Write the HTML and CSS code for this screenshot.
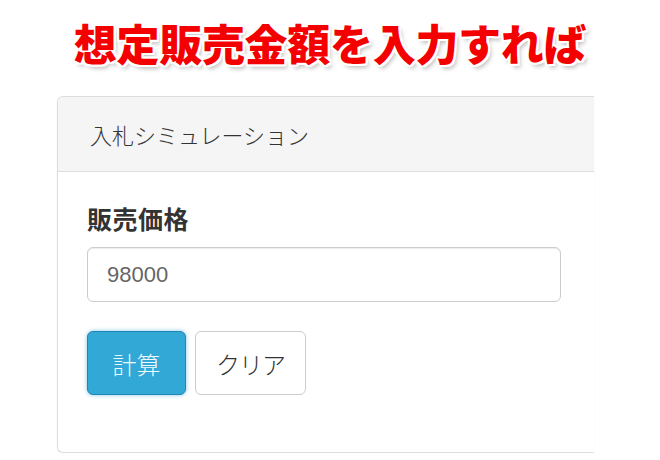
FILE: index.html
```html
<!DOCTYPE html>
<html lang="ja">
<head>
    <meta charset="UTF-8">
    <meta name="viewport" content="width=device-width, initial-scale=1.0">
    <title>入札シミュレーション</title>
    <link rel="stylesheet" href="styles.css">
</head>
<body>
    <h1 class="caption">想定販売金額を入力すれば</h1>

    <div class="panel">
        <div class="panel-heading">入札シミュレーション</div>
        <div class="panel-body">
            <label class="field-label" for="price">販売価格</label>
            <input class="field-input" id="price" type="text" value="98000">
            <div class="actions">
                <button class="btn btn-calc" type="button">計算</button>
                <button class="btn btn-clear" type="button">クリア</button>
            </div>
        </div>
    </div>
</body>
</html>
```

FILE: styles.css
```css
body {
    margin: 0;
    background-color: #fff;
    font-family: "Noto Sans CJK JP", "Liberation Sans", sans-serif;
    color: #333;
}
.caption {
    margin: 0;
    height: 96px;
    padding-top: 14px;
    box-sizing: border-box;
    text-align: center;
    font-size: 43px;
    font-weight: 900;
    line-height: 56px;
    letter-spacing: -0.3px;
    color: #f40000;
    text-shadow:
        2px 0 0 #fff, -2px 0 0 #fff, 0 2px 0 #fff, 0 -2px 0 #fff,
        2px 2px 0 #fff, -2px -2px 0 #fff, 2px -2px 0 #fff, -2px 2px 0 #fff,
        3px 4px 4px rgba(0, 0, 0, 0.25);
}
.panel {
    margin-left: 57px;
    width: 536px;
    border: 1px solid #ddd;
    border-right: none;
    border-radius: 6px 0 0 6px;
    box-shadow: 0 1px 2px rgba(0, 0, 0, 0.05);
}
.panel-heading {
    height: 74px;
    display: flex;
    align-items: center;
    padding: 0 30px 0 32px;
    background-color: #f5f5f5;
    border-bottom: 1px solid #ddd;
    border-radius: 6px 0 0 0;
    font-size: 22px;
    font-weight: 300;
    color: #333;
}
.panel-body {
    padding: 31px 30px 57px 29px;
}
.field-label {
    display: block;
    font-size: 25px;
    font-weight: bold;
    line-height: 30px;
    letter-spacing: 0.5px;
    color: #333;
    margin-bottom: 14px;
}
.field-input {
    display: block;
    width: 474px;
    height: 55px;
    box-sizing: border-box;
    padding: 0 19px;
    border: 1px solid #ccc;
    border-radius: 6px;
    box-shadow: inset 0 1px 1px rgba(0, 0, 0, 0.075);
    font-family: "Liberation Sans", sans-serif;
    font-size: 22px;
    color: #666;
}
.actions {
    display: flex;
    gap: 9px;
    margin-top: 29px;
}
.btn {
    height: 64px;
    padding: 0;
    border-radius: 6px;
    font-family: "Noto Sans CJK JP", sans-serif;
    font-size: 24px;
    font-weight: 300;
    cursor: pointer;
}
.btn-calc {
    width: 99px;
    background-color: #31a8d6;
    border: 1px solid #1f87b4;
    color: #eef9fd;
    box-shadow: 0 0 4px rgba(40, 150, 210, 0.55);
}
.btn-clear {
    width: 111px;
    background-color: #fff;
    border: 1px solid #ccc;
    color: #333;
    letter-spacing: -1px;
}
```
